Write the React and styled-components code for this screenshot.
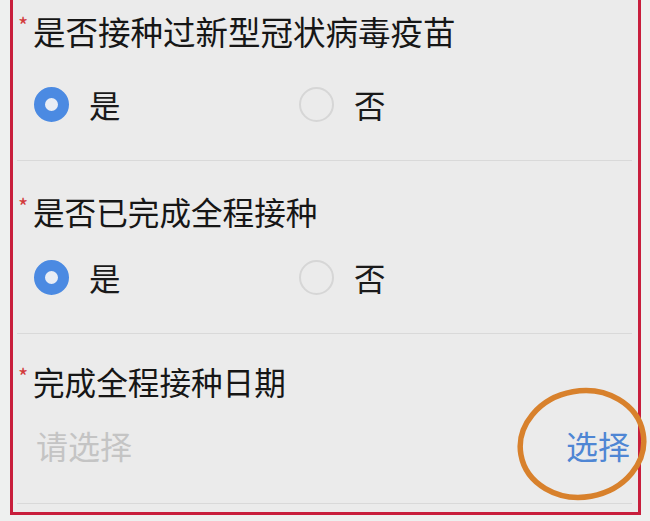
import React from "react";
import styled, { createGlobalStyle } from "styled-components";

const GlobalStyle = createGlobalStyle`
    html, body {
        margin: 0;
        padding: 0;
        background: #eef0ef;
        overflow: hidden;
    }
    body {
        font-family: "Noto Sans CJK SC", "Noto Sans", sans-serif;
    }
`;

const questions = [
    { id: "vaccinated", title: "是否接种过新型冠状病毒疫苗", top: 10, gap: 29, size: 32.5 },
    { id: "completed", title: "是否已完成全程接种", top: 30, gap: 21, size: 31.6 },
];

function Radio({ checked, label }) {
    return (
        <RadioOption>
            <RadioCircle $checked={checked} />
            <RadioLabel>{label}</RadioLabel>
        </RadioOption>
    );
}

function App() {
    return (
        <Page>
            <GlobalStyle />
            <FormBox>
                {questions.map((q) => (
                    <Section key={q.id} $top={q.top}>
                        <Title $size={q.size}>
                            <Star>*</Star>
                            {q.title}
                        </Title>
                        <Row $gap={q.gap}>
                            <Radio checked label="是" />
                            <Radio label="否" />
                        </Row>
                    </Section>
                ))}
                <Section $top={27} $bottom={33}>
                    <Title $size={31.6}>
                        <Star>*</Star>
                        完成全程接种日期
                    </Title>
                    <Row $gap={19} $spread>
                        <Placeholder>请选择</Placeholder>
                        <PickLink>选择</PickLink>
                    </Row>
                </Section>
            </FormBox>
            <Mark viewBox="0 0 140 120" width="140" height="120">
                <ellipse
                    cx="68"
                    cy="59"
                    rx="62"
                    ry="53"
                    transform="rotate(-10 68 59)"
                    fill="none"
                    stroke="#d8812c"
                    strokeWidth="5.5"
                />
            </Mark>
        </Page>
    );
}

const Page = styled.div`
    position: relative;
    width: 650px;
    height: 521px;
    overflow: hidden;
`;

const FormBox = styled.div`
    margin-left: 10px;
    width: 631px;
    height: 515px;
    padding-bottom: 9px;
    box-sizing: border-box;
    background: #ebebeb;
    border: 3px solid #c81e3c;
    border-top: none;
`;

const Section = styled.div`
    margin: 0 6px 0 4px;
    padding: ${(p) => p.$top}px 2px ${(p) => p.$bottom || 31}px 1px;
    border-bottom: 1px solid #d9d9d9;
`;

const Title = styled.div`
    display: flex;
    align-items: center;
    height: 40px;
    font-size: ${(p) => p.$size}px;
    color: #161616;
    white-space: nowrap;
`;

const Star = styled.span`
    width: 15px;
    align-self: flex-start;
    margin-top: 3px;
    font-size: 22px;
    line-height: 22px;
    color: #d23a3a;
`;

const Row = styled.div`
    display: flex;
    align-items: center;
    justify-content: ${(p) => (p.$spread ? "space-between" : "flex-start")};
    height: 50px;
    margin-top: ${(p) => p.$gap}px;
    padding-left: 16px;
`;

const RadioOption = styled.div`
    display: flex;
    align-items: center;
    gap: 20px;
    width: 265px;
`;

const RadioCircle = styled.span`
    width: 35px;
    height: 35px;
    box-sizing: border-box;
    border-radius: 50%;
    background: ${(p) => (p.$checked ? "#e8edf5" : "#ebebeb")};
    border: ${(p) => (p.$checked ? "11.5px solid #4b8ae2" : "2px solid #d6d6d6")};
`;

const RadioLabel = styled.span`
    font-size: 31.5px;
    color: #1a1a1a;
`;

const Placeholder = styled.span`
    margin-left: 2px;
    font-size: 32px;
    color: #c4c4c4;
`;

const PickLink = styled.span`
    font-size: 32px;
    color: #4f86d4;
`;

const Mark = styled.svg`
    position: absolute;
    left: 514px;
    top: 385px;
`;

export default App;
